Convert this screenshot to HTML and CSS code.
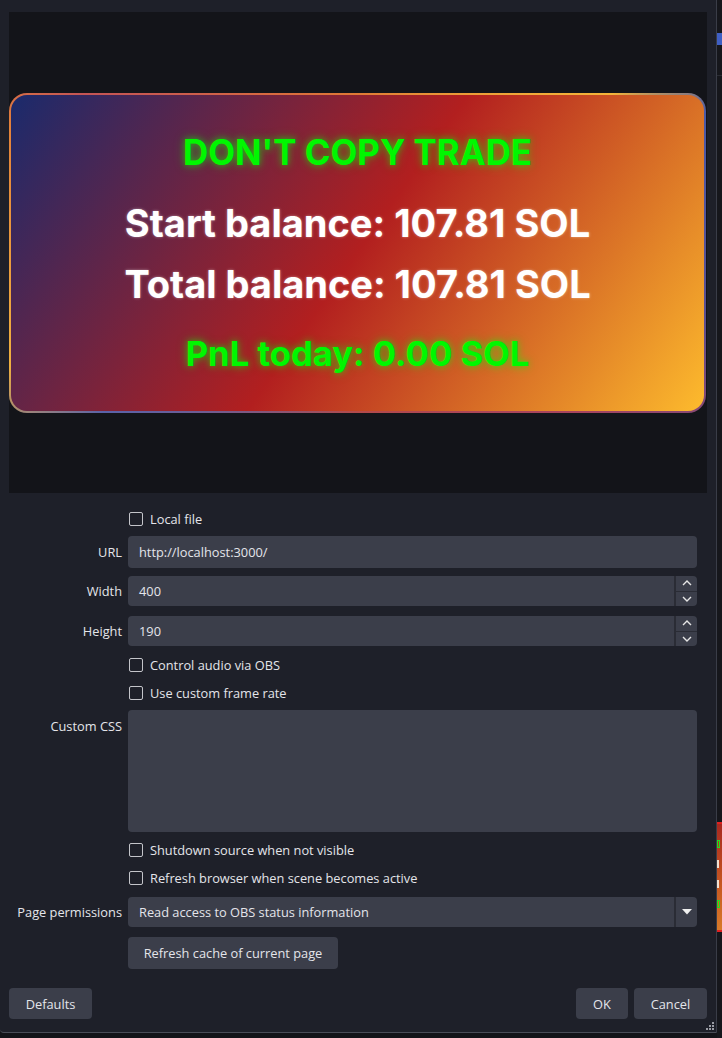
FILE: index.html
```html
<!DOCTYPE html>
<html>
<head>
<meta charset="utf-8">
<link rel="stylesheet" href="styles.css">
</head>
<body>
<div class="dialog">
  <div class="preview">
    <div class="card">
      <div class="line title">DON'T COPY TRADE</div>
      <div class="line white l-start">Start balance: 107.81 SOL</div>
      <div class="line white l-total">Total balance: 107.81 SOL</div>
      <div class="line pnl">PnL today: 0.00 SOL</div>
    </div>
  </div>

  <div class="form">
    <div class="row r-local"><div class="label"></div><label class="check"><span class="box"></span>Local file</label></div>
    <div class="row r-url"><div class="label">URL</div><div class="field tall">http://localhost:3000/</div></div>
    <div class="row r-width"><div class="label">Width</div><div class="field spin"><span class="val">400</span><span class="spinbtns"><span class="sb"><svg width="10" height="6" viewBox="0 0 10 6"><path d="M1 5 L5 1 L9 5" fill="none" stroke="#e6e6e6" stroke-width="1.4"/></svg></span><span class="sb"><svg width="10" height="6" viewBox="0 0 10 6"><path d="M1 1 L5 5 L9 1" fill="none" stroke="#e6e6e6" stroke-width="1.4"/></svg></span></span></div></div>
    <div class="row r-height"><div class="label">Height</div><div class="field spin"><span class="val">190</span><span class="spinbtns"><span class="sb"><svg width="10" height="6" viewBox="0 0 10 6"><path d="M1 5 L5 1 L9 5" fill="none" stroke="#e6e6e6" stroke-width="1.4"/></svg></span><span class="sb"><svg width="10" height="6" viewBox="0 0 10 6"><path d="M1 1 L5 5 L9 1" fill="none" stroke="#e6e6e6" stroke-width="1.4"/></svg></span></span></div></div>
    <div class="row r-audio"><div class="label"></div><label class="check"><span class="box"></span>Control audio via OBS</label></div>
    <div class="row r-fps"><div class="label"></div><label class="check"><span class="box"></span>Use custom frame rate</label></div>
    <div class="row r-css"><div class="label top">Custom CSS</div><div class="field area"></div></div>
    <div class="row r-shut"><div class="label"></div><label class="check"><span class="box"></span>Shutdown source when not visible</label></div>
    <div class="row r-refresh"><div class="label"></div><label class="check"><span class="box"></span>Refresh browser when scene becomes active</label></div>
    <div class="row r-perm"><div class="label">Page permissions</div><div class="field select"><span class="val">Read access to OBS status information</span><span class="drop"><svg width="10" height="6" viewBox="0 0 10 6"><path d="M0 0 L10 0 L5 5.5 Z" fill="#f0f0f0"/></svg></span></div></div>
    <div class="row r-cache"><div class="label"></div><div><button class="btn cache">Refresh cache of current page</button></div></div>
  </div>

  <div class="footer">
    <button class="btn defaults">Defaults</button>
    <div class="right">
      <button class="btn ok">OK</button>
      <button class="btn cancel">Cancel</button>
    </div>
  </div>

  <svg class="grip" width="9" height="9" viewBox="0 0 9 9">
    <rect x="7" y="1" width="2" height="2" fill="#9a9ca4"/>
    <rect x="4" y="4" width="2" height="2" fill="#9a9ca4"/>
    <rect x="7" y="4" width="2" height="2" fill="#9a9ca4"/>
    <rect x="1" y="7" width="2" height="2" fill="#9a9ca4"/>
    <rect x="4" y="7" width="2" height="2" fill="#9a9ca4"/>
    <rect x="7" y="7" width="2" height="2" fill="#9a9ca4"/>
  </svg>
</div>
<div class="behind">
  <div class="b-gap1"></div>
  <div class="b-blue"></div>
  <div class="b-gap2"></div>
  <div class="b-line"></div>
  <div class="b-gap3"></div>
  <div class="b-card"><span class="b-g1"></span><span class="b-w1"></span><span class="b-w2"></span><span class="b-g2"></span></div>
</div>
</body>
</html>
```

FILE: styles.css
```css
* { box-sizing: border-box; }
html, body { margin: 0; padding: 0; }
body {
  width: 722px;
  height: 1038px;
  background: #131419;
  display: flex;
  align-items: flex-start;
  overflow: hidden;
  font-family: "Open Sans", "Noto Sans", sans-serif;
  font-size: 12.8px;
  color: #e4e5ea;
}
.dialog {
  position: relative;
  width: 717px;
  height: 1033px;
  flex: none;
  background: #1e2029;
  border-right: 1px solid #3a3d48;
  border-bottom: 1px solid #4a4d58;
  border-bottom-left-radius: 4px;
  display: flex;
  flex-direction: column;
}
.preview {
  margin: 12px 9px 0 9px;
  height: 481px;
  background: #131419;
  display: flex;
  align-items: center;
}
.card {
  width: 697px;
  height: 320px;
  border: 2px solid transparent;
  border-radius: 18px;
  background:
    linear-gradient(125deg, #1a2a6c 0%, #b21f1f 50%, #fdbb2d 100%) padding-box,
    conic-gradient(from 0deg, #e07a35 0deg, #f4b43a 58deg, #4a5aa8 68deg, #5a4f92 100deg, #a8445e 125deg, #b44a4a 180deg, #5a62a8 238deg, #efb040 252deg, #e3823a 290deg, #c45555 300deg, #d86a40 330deg, #e07a35 360deg) border-box;
  display: flex;
  flex-direction: column;
  align-items: center;
  padding-top: 40px;
  font-family: Inter, "Noto Sans", sans-serif;
  font-weight: 700;
  text-align: center;
}
.line { line-height: 1; white-space: nowrap; }
.title {
  font-size: 34.8px;
  font-weight: 650;
  color: #00f700;
  text-shadow: 0 0 6px rgba(0, 255, 0, 0.55), 0 0 12px rgba(0, 255, 0, 0.35);
  margin-bottom: 35px;
}
.white {
  font-size: 38px;
  color: #ffffff;
  text-shadow: 0 0 3px rgba(255, 255, 255, 0.45);
}
.l-start { margin-bottom: 23px; }
.l-total { margin-bottom: 33px; }
.pnl {
  font-size: 34.6px;
  color: #00f700;
  text-shadow: 0 0 6px rgba(0, 255, 0, 0.55), 0 0 12px rgba(0, 255, 0, 0.35);
}

.form {
  margin: 16px 19px 0 9px;
  display: flex;
  flex-direction: column;
}
.row {
  display: grid;
  grid-template-columns: 113px 1fr;
  column-gap: 6px;
  align-items: center;
}
.label { text-align: right; white-space: nowrap; }
.label.top { align-self: start; padding-top: 7px; }
.check {
  display: flex;
  align-items: center;
  height: 20px;
  white-space: nowrap;
}
.box {
  width: 14px;
  height: 14px;
  margin-left: 1px;
  margin-right: 7px;
  border: 1px solid #c4c5ca;
  border-radius: 2px;
  flex: none;
}
.field {
  background: #3b3e4a;
  border-radius: 4px;
  height: 30px;
  display: flex;
  align-items: center;
  padding-left: 11px;
}
.field.tall { height: 32px; }
.spin, .select { justify-content: space-between; padding-right: 0; }
.spinbtns {
  width: 23px;
  height: 30px;
  border-left: 2px solid #2a2c35;
  display: flex;
  flex-direction: column;
}
.sb {
  flex: 1;
  display: flex;
  align-items: center;
  justify-content: center;
}
.sb + .sb { border-top: 1px solid #2a2c35; }
.drop {
  width: 23px;
  height: 30px;
  border-left: 2px solid #2a2c35;
  display: flex;
  align-items: center;
  justify-content: center;
}
.field.area { height: 122px; }

.r-local { margin-top: 0; }
.r-url { margin-top: 7px; }
.r-width { margin-top: 8px; }
.r-height { margin-top: 10px; }
.r-audio { margin-top: 9px; }
.r-fps { margin-top: 8px; }
.r-css { margin-top: 7px; }
.r-shut { margin-top: 8px; }
.r-refresh { margin-top: 8px; }
.r-perm { margin-top: 9px; }
.r-cache { margin-top: 10px; }

.btn {
  font-family: "Open Sans", "Noto Sans", sans-serif;
  font-size: 12.8px;
  color: #e4e5ea;
  background: #3b3e4a;
  border: none;
  border-radius: 4px;
  height: 32px;
  padding: 0;
}
.cache { width: 210px; }
.footer {
  margin-top: 19px;
  padding: 0 9px 0 9px;
  display: flex;
  justify-content: space-between;
}
.footer .btn { height: 31px; }
.defaults { width: 83px; }
.right { display: flex; gap: 6px; }
.ok { width: 52px; }
.cancel { width: 73px; }
.grip { position: absolute; right: 2px; bottom: 2px; }

.behind {
  width: 5px;
  height: 1038px;
  flex: none;
  background: #16171c;
  display: flex;
  flex-direction: column;
}
.b-gap1 { height: 33px; }
.b-blue { height: 12px; background: #3f5fc4; }
.b-gap2 { height: 30px; }
.b-line { height: 1px; background: #2a2c33; }
.b-gap3 { height: 746px; }
.b-card {
  height: 110px;
  background: linear-gradient(180deg, #a8281f, #c85a22 60%, #d87a28);
  border-top: 2px solid #e02020;
  border-bottom: 2px solid #e02020;
  display: flex;
  flex-direction: column;
  padding-top: 16px;
  gap: 12px;
}
.b-g1, .b-g2 { height: 8px; width: 3px; border: 1px solid #22dd22; }
.b-w1, .b-w2 { height: 8px; width: 2px; background: #f0e0d0; }
```
